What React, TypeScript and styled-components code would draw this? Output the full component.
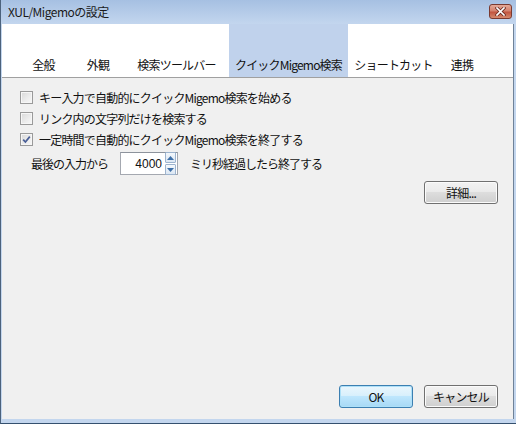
import React from "react";
import styled, { createGlobalStyle } from "styled-components";

const Global = createGlobalStyle`
  html, body { margin: 0; padding: 0; background: #fff; }
  body { font-family: "Noto Sans CJK JP", "Liberation Sans", sans-serif; font-size: 12px; }
`;

const Frame = styled.div`
  width: 516px;
  height: 424px;
  box-sizing: border-box;
  display: flex;
  flex-direction: column;
  background: linear-gradient(to bottom, #a6c0e2 0px, #c3d6ee 24px, #c3d6ee 100%);
  border-left: 1px solid #4c627c;
  border-bottom: 1px solid #34506e;
`;

const TitleBar = styled.div`
  height: 24px;
  flex: none;
  display: flex;
  align-items: center;
  justify-content: space-between;
  padding: 0 4px 0 7px;
`;

const Title = styled.div`
  font-size: 12px;
  letter-spacing: -0.5px;
  color: #1a1a1a;
  line-height: 16px;
`;

const CloseBtn = styled.div`
  width: 21px;
  height: 13px;
  border: 1px solid #7a3a30;
  border-radius: 3px;
  background: linear-gradient(to bottom, #e4a998 0%, #d4826e 45%, #c2553f 55%, #d58a6e 100%);
  display: flex;
  align-items: center;
  justify-content: center;
  margin-top: -1px;
`;

const Client = styled.div`
  flex: 1;
  display: flex;
  flex-direction: column;
  margin: 0 2px 4px 1px;
  border-right: 1px solid #6f8298;
  background: #f0f0f0;
`;

const TabBar = styled.div`
  height: 53px;
  flex: none;
  display: flex;
  padding-left: 13px;
  background: #fff;
  border-bottom: 1px solid #a0a0a0;
`;

const Tab = styled.div<{ $w: number; $sel?: boolean }>`
  width: ${(p) => p.$w}px;
  display: flex;
  align-items: flex-end;
  justify-content: center;
  padding-bottom: 4px;
  box-sizing: border-box;
  background: ${(p) => (p.$sel ? "#c0d2ec" : "transparent")};
  font-size: 12px;
  letter-spacing: -0.8px;
  line-height: 16px;
  color: #111;
  white-space: nowrap;
`;

const Body = styled.div`
  flex: 1;
  display: flex;
  flex-direction: column;
  padding: 9px 15px 0 18px;
`;

const CheckRow = styled.label`
  display: flex;
  align-items: center;
  height: 21px;
  gap: 4px;
  font-size: 12px;
  letter-spacing: -0.8px;
  color: #111;
  line-height: 16px;
`;

const Box = styled.span<{ $checked?: boolean }>`
  width: 11px;
  height: 11px;
  flex: none;
  border: 1px solid #9a9a9a;
  background: linear-gradient(135deg, #d8d8d8 0%, #ededed 60%, #f8f8f8 100%);
  box-shadow: inset 0 0 0 1px #f6f6f6;
  display: flex;
  align-items: center;
  justify-content: center;
  margin-right: 2px;
`;

const SpinRow = styled.div`
  display: flex;
  align-items: center;
  height: 25px;
  margin-top: 1px;
  padding-left: 11px;
  font-size: 12px;
  letter-spacing: -1px;
  color: #111;
  line-height: 16px;
`;

const SpinLabel = styled.span`
  width: 89px;
`;

const Spinner = styled.div`
  width: 58px;
  height: 23px;
  box-sizing: border-box;
  border: 1px solid #a4a8b0;
  border-top-color: #8d939c;
  background: #fff;
  display: flex;
  align-items: center;
  justify-content: flex-end;
  padding-right: 1px;
  margin-right: 12px;
`;

const SpinValue = styled.span`
  font-family: "Liberation Sans", sans-serif;
  font-size: 12px;
  letter-spacing: 0;
  margin-right: 3px;
`;

const SpinButtons = styled.div`
  display: flex;
  flex-direction: column;
  gap: 1px;
`;

const SpinBtn = styled.div`
  width: 9px;
  height: 9px;
  border: 1px solid #9db4cf;
  border-radius: 1px;
  background: linear-gradient(to bottom, #f4f8fc, #dce7f3);
  display: flex;
  align-items: center;
  justify-content: center;
`;

const Right = styled.div`
  display: flex;
  justify-content: flex-end;
  margin-top: 5px;
`;

const Button = styled.button<{ $def?: boolean }>`
  width: 74px;
  height: 23px;
  box-sizing: border-box;
  border: 1px solid ${(p) => (p.$def ? "#3c7fb1" : "#707070")};
  border-radius: 3px;
  background: ${(p) =>
    p.$def
      ? "linear-gradient(to bottom, #eaf6fd 0%, #d9f0fc 45%, #bee6fd 50%, #a7d9f5 100%)"
      : "linear-gradient(to bottom, #f2f2f2 0%, #ebebeb 45%, #dddddd 50%, #cfcfcf 100%)"};
  box-shadow: inset 0 0 0 1px ${(p) => (p.$def ? "#aee0f8" : "#fbfbfb")};
  font-family: "Noto Sans CJK JP", "Liberation Sans", sans-serif;
  font-size: 12px;
  letter-spacing: -0.8px;
  color: #111;
  padding: 0;
  line-height: 16px;
`;

const Footer = styled.div`
  display: flex;
  justify-content: flex-end;
  gap: 11px;
  padding: 0 15px 11px 0;
`;

const Check = () => (
  <svg width="9" height="9" viewBox="0 0 9 9">
    <path d="M1.2 4.6 L3.4 7 L7.8 1.6" fill="none" stroke="#4a5f97" strokeWidth="1.7" />
  </svg>
);

const Arrow = ({ up }: { up?: boolean }) => (
  <svg width="7" height="4" viewBox="0 0 7 4">
    <path d={up ? "M0 4 L3.5 0 L7 4 Z" : "M0 0 L3.5 4 L7 0 Z"} fill="#3d6fa8" />
  </svg>
);

const tabs: { label: string; w: number; sel?: boolean }[] = [
  { label: "全般", w: 57 },
  { label: "外観", w: 52 },
  { label: "検索ツールバー", w: 105 },
  { label: "クイックMigemo検索", w: 119, sel: true },
  { label: "ショートカット", w: 91 },
  { label: "連携", w: 46 },
];

export default function App() {
  return (
    <>
      <Global />
      <Frame>
        <TitleBar>
          <Title>XUL/Migemoの設定</Title>
          <CloseBtn>
            <svg width="11" height="9" viewBox="0 0 11 9">
              <path d="M2 1 L9 8 M9 1 L2 8" stroke="#6a2a20" strokeWidth="3.2" strokeLinecap="square" />
              <path d="M2 1 L9 8 M9 1 L2 8" stroke="#ffffff" strokeWidth="1.7" strokeLinecap="square" />
            </svg>
          </CloseBtn>
        </TitleBar>
        <Client>
          <TabBar>
            {tabs.map((t) => (
              <Tab key={t.label} $w={t.w} $sel={t.sel}>
                {t.label}
              </Tab>
            ))}
          </TabBar>
          <Body>
            <CheckRow>
              <Box />
              キー入力で自動的にクイックMigemo検索を始める
            </CheckRow>
            <CheckRow>
              <Box />
              リンク内の文字列だけを検索する
            </CheckRow>
            <CheckRow>
              <Box $checked>
                <Check />
              </Box>
              一定時間で自動的にクイックMigemo検索を終了する
            </CheckRow>
            <SpinRow>
              <SpinLabel>最後の入力から</SpinLabel>
              <Spinner>
                <SpinValue>4000</SpinValue>
                <SpinButtons>
                  <SpinBtn>
                    <Arrow up />
                  </SpinBtn>
                  <SpinBtn>
                    <Arrow />
                  </SpinBtn>
                </SpinButtons>
              </Spinner>
              ミリ秒経過したら終了する
            </SpinRow>
            <Right>
              <Button>詳細...</Button>
            </Right>
          </Body>
          <Footer>
            <Button $def>OK</Button>
            <Button>キャンセル</Button>
          </Footer>
        </Client>
      </Frame>
    </>
  );
}
